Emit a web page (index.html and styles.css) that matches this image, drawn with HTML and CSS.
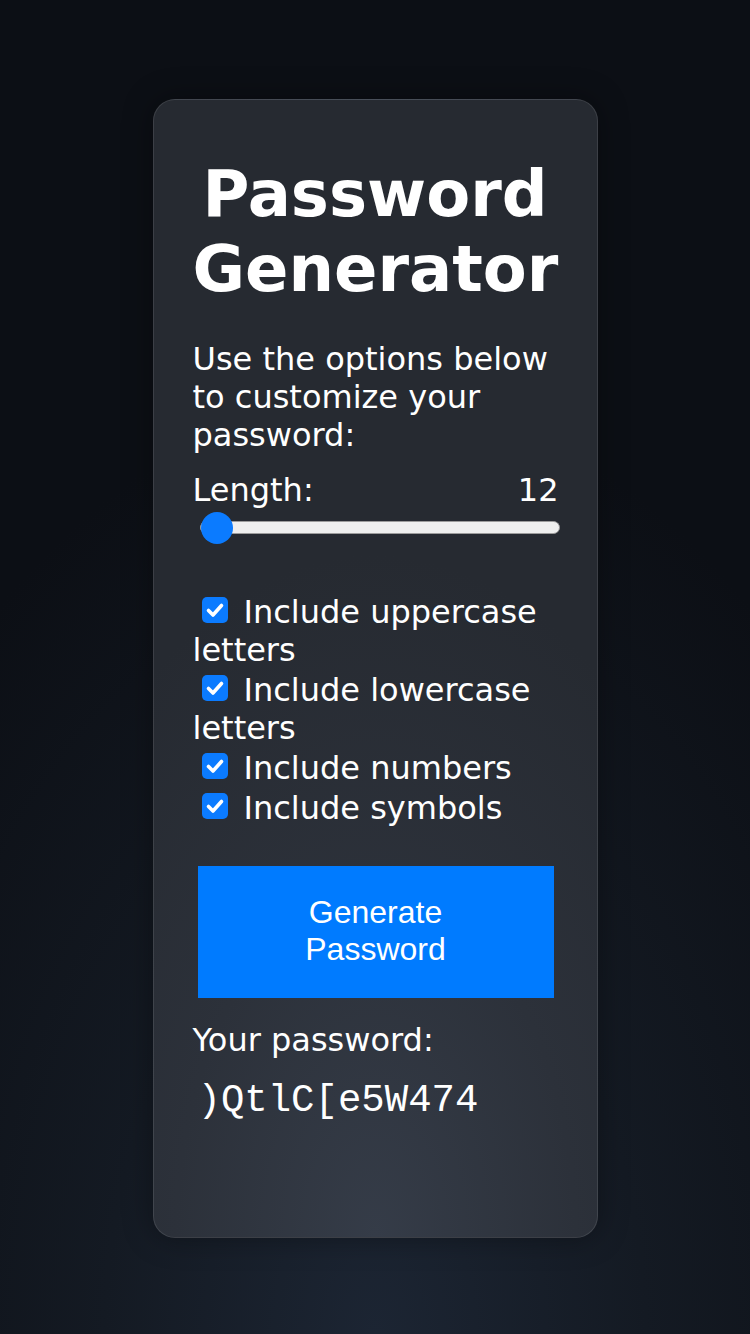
FILE: index.html
```html
<!DOCTYPE html>
<html lang="en">
<head>
<meta charset="utf-8">
<title>Password Generator</title>
<link rel="stylesheet" href="styles.css">
</head>
<body>
<main class="card">
  <h1 class="title">Password Generator</h1>
  <p class="intro">Use the options below to customize your password:</p>
  <div class="length-row">
    <span>Length:</span>
    <span>12</span>
  </div>
  <input class="slider" type="range" min="12" max="50" value="12">
  <div class="options">
    <label class="option"><span class="box"><svg viewBox="0 0 26 26" width="26" height="26"><path d="M6.5 13.5 L11 18 L19.5 8.5" fill="none" stroke="#fff" stroke-width="3.6" stroke-linecap="round" stroke-linejoin="round"/></svg></span>Include uppercase letters</label>
    <label class="option"><span class="box"><svg viewBox="0 0 26 26" width="26" height="26"><path d="M6.5 13.5 L11 18 L19.5 8.5" fill="none" stroke="#fff" stroke-width="3.6" stroke-linecap="round" stroke-linejoin="round"/></svg></span>Include lowercase letters</label>
    <label class="option"><span class="box"><svg viewBox="0 0 26 26" width="26" height="26"><path d="M6.5 13.5 L11 18 L19.5 8.5" fill="none" stroke="#fff" stroke-width="3.6" stroke-linecap="round" stroke-linejoin="round"/></svg></span>Include numbers</label>
    <label class="option"><span class="box"><svg viewBox="0 0 26 26" width="26" height="26"><path d="M6.5 13.5 L11 18 L19.5 8.5" fill="none" stroke="#fff" stroke-width="3.6" stroke-linecap="round" stroke-linejoin="round"/></svg></span>Include symbols</label>
  </div>
  <button class="generate" type="button">Generate Password</button>
  <p class="result-label">Your password:</p>
  <div class="result">)QtlC[e5W474</div>
</main>
</body>
</html>
```

FILE: styles.css
```css
html, body {
  margin: 0;
  padding: 0;
}

body {
  min-height: 1334px;
  box-sizing: border-box;
  padding-top: 99px;
  background: radial-gradient(ellipse 80% 70% at 50% 100%, #1c2533 0%, #141a23 45%, #0c0f15 100%);
  background-color: #0c0f15;
  font-family: "DejaVu Sans", sans-serif;
  color: #fff;
  display: flex;
  flex-direction: column;
  align-items: center;
}

.card {
  width: 445px;
  box-sizing: border-box;
  padding: 57px 39px 114px;
  border: 1px solid rgba(255, 255, 255, 0.1);
  border-radius: 22px;
  background: radial-gradient(ellipse 90% 60% at 50% 100%, #353c48 0%, #2c313a 50%, #262a31 100%);
  box-shadow: 0 0 30px rgba(0, 0, 0, 0.35);
}

.title {
  margin: 0 0 33px;
  font-size: 64px;
  line-height: 75px;
  font-weight: bold;
  text-align: center;
}

.intro {
  margin: 0 0 17px;
  font-size: 32px;
  line-height: 38px;
}

.length-row {
  display: flex;
  justify-content: space-between;
  font-size: 32px;
  line-height: 38px;
}

.length-row span:last-child {
  margin-right: -1px;
}

.slider {
  -webkit-appearance: none;
  appearance: none;
  display: block;
  width: 360px;
  height: 32px;
  margin: 2px 0 0 7px;
  padding: 0;
  background: transparent;
}

.slider::-webkit-slider-runnable-track {
  height: 13px;
  background: #efefef;
  border: 1px solid #9c9c9c;
  border-radius: 8px;
}

.slider::-webkit-slider-thumb {
  -webkit-appearance: none;
  appearance: none;
  width: 32px;
  height: 32px;
  margin-top: -10px;
  border-radius: 50%;
  background: #0b7bff;
  border: none;
}

.options {
  margin-top: 48px;
  display: flex;
  flex-direction: column;
}

.option {
  display: block;
  font-size: 32px;
  line-height: 38px;
}

.box {
  display: inline-block;
  width: 26px;
  height: 26px;
  margin: 6px 16px 0 9px;
  border-radius: 5px;
  background: #0b7bff;
  vertical-align: baseline;
}

.box svg {
  display: block;
}

.generate {
  display: block;
  width: 356px;
  margin: 39px 0 0 5px;
  padding: 28px 44px 30px;
  border: none;
  background: #007bff;
  color: #fff;
  font-family: "Liberation Sans", Arial, sans-serif;
  font-size: 32px;
  line-height: normal;
  text-align: center;
}

.result-label {
  margin: 23px 0 0;
  font-size: 32px;
  line-height: 38px;
}

.result {
  margin: 20px 0 0 5px;
  font-family: "Liberation Mono", monospace;
  font-size: 39px;
  line-height: normal;
}
```
